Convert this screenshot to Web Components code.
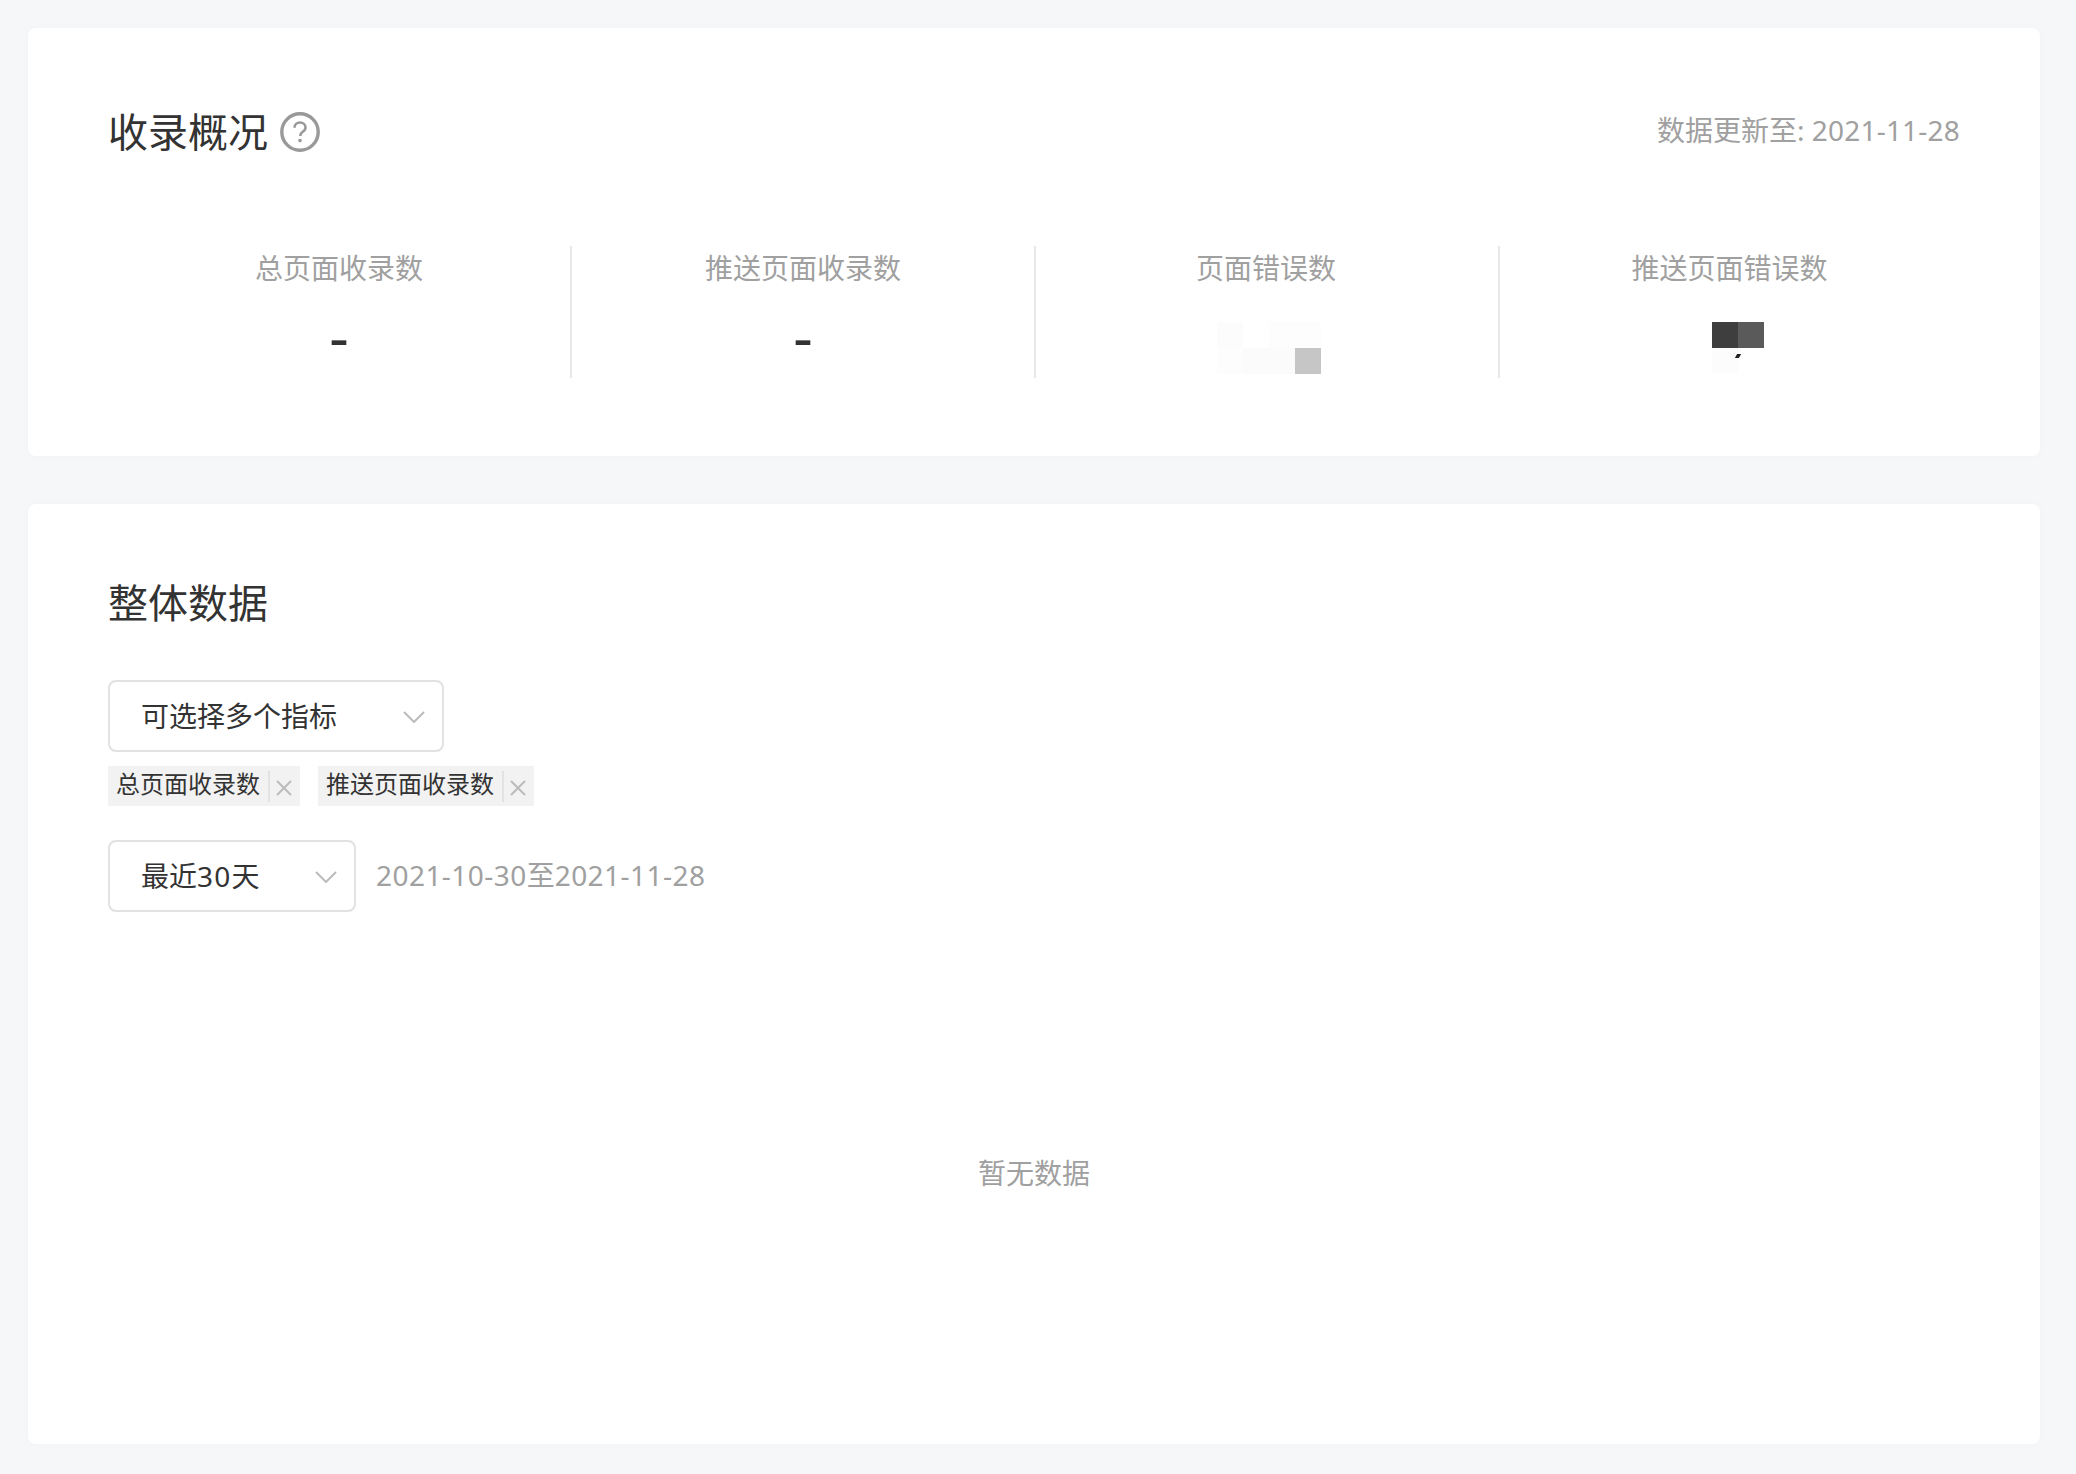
<!DOCTYPE html>
<html lang="zh">
<head>
<meta charset="utf-8">
<title>收录概况</title>
<style>
  html, body { margin: 0; background: #f6f7f9; }
  body { font-family: "Noto Sans", "Noto Sans CJK SC", sans-serif; color: #333; }
</style>
</head>
<body>
<index-page>
  <panel-card class="overview">
    <panel-head>
      <span>收录概况</span>
      <help-icon slot="extra"></help-icon>
      <span slot="aside">数据更新至: <num-text style="letter-spacing:.2px">2021-11-28</num-text></span>
    </panel-head>
    <stat-row>
      <stat-cell><span slot="label">总页面收录数</span>-</stat-cell>
      <stat-cell><span slot="label">推送页面收录数</span>-</stat-cell>
      <stat-cell><span slot="label">页面错误数</span><blur-mosaic kind="light"></blur-mosaic></stat-cell>
      <stat-cell><span slot="label">推送页面错误数</span><blur-mosaic kind="dark"></blur-mosaic></stat-cell>
    </stat-row>
  </panel-card>
  <panel-card class="trend">
    <panel-head><span>整体数据</span></panel-head>
    <select-box style="--w:336px; --gap:49px">可选择多个指标</select-box>
    <tag-list>
      <metric-tag>总页面收录数</metric-tag>
      <metric-tag>推送页面收录数</metric-tag>
    </tag-list>
    <range-row>
      <select-box style="--w:248px">最近<num-text style="letter-spacing:1.2px">30</num-text>天</select-box>
      <span><num-text>2021-10-30</num-text>至<num-text>2021-11-28</num-text></span>
    </range-row>
    <empty-state>暂无数据</empty-state>
  </panel-card>
</index-page>

<script>
function define(name, css, html, init) {
  customElements.define(name, class extends HTMLElement {
    constructor() {
      super();
      this.attachShadow({ mode: 'open' }).innerHTML = `<style>${css}</style>${html}`;
    }
    connectedCallback() { if (init) init(this); }
  });
}

const chevron = `<svg width="22" height="12" viewBox="0 0 22 12" fill="none" stroke="#bbb" stroke-width="2"><path d="M1 1l10 10L21 1"/></svg>`;

define('index-page', `
  :host { display: flex; flex-direction: column; gap: 48px; padding: 28px 36px 30px 28px; }
`, `<slot></slot>`);

define('panel-card', `
  :host { display: block; background: #fff; border-radius: 8px; box-shadow: 0 0 12px rgba(40,50,80,.02); padding: 76px 80px 78px; }
  :host(.trend) { padding: 71px 80px 8px; }
`, `<slot></slot>`);

define('panel-head', `
  :host { display: flex; align-items: center; font-size: 40px; line-height: 56px; color: #333; }
  .extra { display: flex; margin-left: 12px; }
  .aside { margin-left: auto; margin-bottom: 5px; font-size: 28px; line-height: 44px; color: #a0a0a0; }
`, `<slot></slot><div class="extra"><slot name="extra"></slot></div><div class="aside"><slot name="aside"></slot></div>`);

define('num-text', `
  :host { display: inline; letter-spacing: .45px; }
`, `<slot></slot>`);

define('help-icon', `
  :host { display: block; width: 40px; height: 40px; }
  svg { display: block; }
`, `<svg width="40" height="40" viewBox="0 0 40 40" fill="none" stroke="#999">
  <circle cx="20" cy="20" r="18.2" stroke-width="3.4"/>
  <path d="M14.5 15.8c0-3.3 2.4-5.3 5.5-5.3s5.5 2 5.5 4.9c0 2.2-1.2 3.3-2.8 4.4-1.6 1.1-2.5 2.1-2.5 4.2" stroke-width="2.6"/>
  <circle cx="20" cy="28.6" r="1.8" fill="#999" stroke="none"/>
</svg>`);

define('stat-row', `
  :host { display: grid; grid-template-columns: repeat(4, 464px); margin-top: 86px; }
`, `<slot></slot>`);

define('stat-cell', `
  :host { display: block; height: 132px; text-align: center; border-right: 2px solid #e8e8e8; }
  :host(:last-child) { border-right: 0; }
  .label { font-size: 28px; line-height: 44px; color: #a0a0a0; }
  :host(:nth-child(3)) .label { padding-right: 2px; }
  :host(:last-child) .label { padding-right: 5px; }
  .value { margin-top: 32px; height: 52px; font: 400 60px/32px "Liberation Sans", sans-serif; color: #333; display: flex; justify-content: center; }
`, `<div class="label"><slot name="label"></slot></div><div class="value"><slot></slot></div>`);

define('blur-mosaic', `
  :host { display: grid; grid-template-columns: repeat(4, 26px); grid-auto-rows: 26px; position: relative; transform: translateX(2px); }
  :host([kind=dark]) { grid-template-columns: repeat(2, 26px); transform: translateX(6px); }
  .speck { position: absolute; left: 24px; top: 32px; width: 4px; height: 4px; background: #222; transform: skewX(-30deg); }
`, ``, el => {
  const kind = el.getAttribute('kind');
  const cells = kind === 'dark'
    ? ['#3e3e3e', '#5a5a5a', '#fcfcfc', '#fff']
    : ['#fcfcfc', '#fff', '#fdfdfd', '#fdfdfd', '#fdfdfd', '#fbfbfb', '#fbfbfb', '#c6c6c6'];
  el.shadowRoot.append(...cells.map(c => {
    const d = document.createElement('div');
    d.style.background = c;
    return d;
  }));
  if (kind === 'dark') {
    const s = document.createElement('div');
    s.className = 'speck';
    el.shadowRoot.append(s);
  }
});

define('select-box', `
  :host { display: flex; align-items: center; justify-content: space-between; box-sizing: border-box; width: var(--w); height: 72px; margin-top: var(--gap, 0); padding: 0 17px 0 31px; border: 2px solid #e2e2e2; border-radius: 8px; font-size: 28px; color: #333; }
  .text { margin-bottom: 3px; }
  svg { display: block; margin-top: 1px; }
`, `<div class="text"><slot></slot></div>${chevron}`);

define('tag-list', `
  :host { display: flex; gap: 18px; margin-top: 14px; }
`, `<slot></slot>`);

define('metric-tag', `
  :host { display: flex; align-items: center; height: 40px; padding: 0 8px; background: #f2f2f2; font-size: 24px; color: #333; }
  .text { margin-bottom: 8px; }
  .sep { width: 2px; height: 31px; margin: 0 6px 0 8px; background: #e2e2e2; }
  svg { display: block; margin-top: 4px; }
`, `<div class="text"><slot></slot></div><div class="sep"></div><svg width="16" height="16" viewBox="0 0 16 16" stroke="#bbb" stroke-width="2"><path d="M1 1l14 14M15 1L1 15"/></svg>`);

define('range-row', `
  :host { display: flex; align-items: center; gap: 20px; margin-top: 34px; font-size: 28px; color: #a0a0a0; }
  ::slotted(span) { margin-bottom: 4px; }
`, `<slot></slot>`);

define('empty-state', `
  :host { display: flex; align-items: center; justify-content: center; height: 520px; padding-bottom: 4px; font-size: 28px; color: #a0a0a0; }
`, `<slot></slot>`);
</script>
</body>
</html>
